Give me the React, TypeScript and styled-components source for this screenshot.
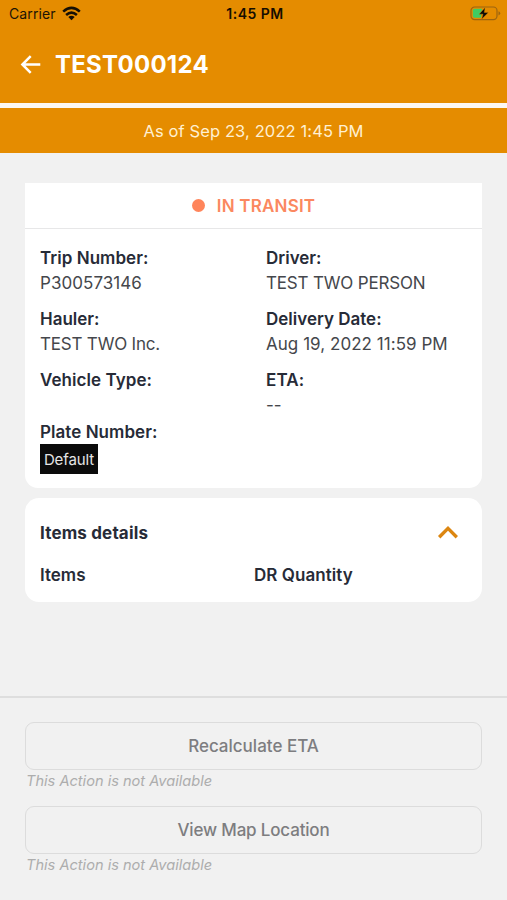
import React from "react";
import styled, { createGlobalStyle } from "styled-components";

const orange = "#e58c00";
const ink = "#272b37";

const GlobalStyle = createGlobalStyle`
  *, *::before, *::after { box-sizing: border-box; }
  body {
    margin: 0;
    background: #f1f1f1;
    font-family: Inter, "Liberation Sans", sans-serif;
  }
`;

const Screen = styled.div`
  display: flex;
  flex-direction: column;
  width: 100%;
  height: 900px;
  overflow: hidden;
  background: #f1f1f1;
`;

const Text = styled.span<{ $spacing?: number }>`
  white-space: nowrap;
  letter-spacing: ${(p) => p.$spacing ?? 0}px;
`;

const StatusBar = styled.div`
  display: grid;
  grid-template-columns: 1fr auto 1fr;
  align-items: center;
  height: 27px;
  padding: 0 6px 0 9px;
  background: ${orange};
  color: #1c1405;
  font-size: 14px;
  line-height: 27px;
`;

const Carrier = styled.div`
  display: flex;
  align-items: center;
  gap: 6px;
`;

const Clock = styled(Text)`
  font-weight: 600;
  color: #160e00;
`;

const Battery = styled.svg`
  justify-self: end;
`;

const Header = styled.header`
  display: flex;
  align-items: center;
  gap: 14px;
  height: 76px;
  padding: 0 20px;
  background: ${orange};
  color: #fff;
`;

const Title = styled.h1`
  margin: 0;
  font-size: 24px;
  font-weight: 700;
  line-height: 76px;
`;

const AsOf = styled.div`
  height: 45px;
  margin-top: 5px;
  background: ${orange};
  color: #fff0d2;
  font-size: 16.5px;
  line-height: 46px;
  text-align: center;
  box-shadow: 0 -5px 0 #fcf8f3;
`;

const Content = styled.main`
  display: flex;
  flex-direction: column;
  gap: 10px;
  flex: 1;
  padding: 30px 25px 0;
`;

const TripCard = styled.section`
  height: 305px;
  background: #fff;
  border-radius: 0 0 13px 13px;
`;

const Status = styled.div`
  display: flex;
  align-items: center;
  justify-content: center;
  gap: 12px;
  height: 46px;
  border-bottom: 1px solid #e7e7e8;
  color: #fb8860;
  font-size: 17px;
  font-weight: 600;
`;

const Dot = styled.i`
  width: 13px;
  height: 13px;
  border-radius: 50%;
  background: #ff855b;
`;

const Details = styled.div`
  display: grid;
  grid-template-columns: 226px 1fr;
  grid-template-rows: 61px 61px 52px auto;
  padding: 16px 15px 0;
`;

const Field = styled.div`
  display: flex;
  flex-direction: column;
  align-items: flex-start;
  font-size: 17px;
  line-height: 26px;
`;

const Label = styled(Text)`
  height: 25px;
  color: ${ink};
  font-weight: 600;
`;

const Value = styled(Text)`
  color: #45474c;
`;

const Plate = styled.div`
  width: 58px;
  height: 30px;
  background: #0b0b0b;
  color: #e5e5e5;
  font-size: 15px;
  line-height: 31px;
  text-align: center;
`;

const ItemsCard = styled.section`
  height: 104px;
  padding: 21px 15px 0;
  background: #fff;
  border-radius: 14px;
  color: ${ink};
  font-size: 17px;
  font-weight: 600;
  line-height: 28px;
`;

const ItemsHeading = styled.div`
  display: flex;
  align-items: center;
  justify-content: space-between;
  height: 28px;
  padding-right: 8px;
  font-weight: 700;
`;

const Chevron = styled.svg`
  margin-bottom: 2px;
`;

const Columns = styled.div`
  display: grid;
  grid-template-columns: 214px 1fr;
  margin-top: 14px;
`;

const Footer = styled.footer`
  height: 204px;
  padding: 24px 25px 0;
  border-top: 2px solid #dedede;
`;

const Action = styled.button`
  display: block;
  width: 100%;
  height: 48px;
  padding: 0;
  border: 1.5px solid #dcdcdc;
  border-radius: 9px;
  background: transparent;
  color: #7d7d80;
  font: 500 17px/46px Inter, sans-serif;
`;

const Note = styled.p`
  margin: 0;
  height: 36px;
  padding-left: 1px;
  color: #adadad;
  font-size: 14.6px;
  font-style: italic;
  line-height: 23px;
`;

const fields = [
  { label: "Trip Number:", value: "P300573146", ls: 0.04, vs: 0.05 },
  { label: "Driver:", value: "TEST TWO PERSON", ls: 0, vs: -0.18 },
  { label: "Hauler:", value: "TEST TWO Inc.", ls: 0, vs: -0.2 },
  { label: "Delivery Date:", value: "Aug 19, 2022 11:59 PM", ls: 0, vs: 0.04 },
  { label: "Vehicle Type:", value: "", ls: 0.06, vs: 0 },
  { label: "ETA:", value: "--", ls: 0.1, vs: 0 },
];

const actions = [
  { label: "Recalculate ETA", ls: 0 },
  { label: "View Map Location", ls: -0.17 },
];

export default function App() {
  return (
    <Screen>
      <GlobalStyle />
      <StatusBar>
        <Carrier>
          <Text $spacing={0.1}>Carrier</Text>
          <svg width="19" height="15" viewBox="0 0 19 15" fill="none" stroke="#171005" strokeWidth="2.6">
            <path d="M1.2 5.6Q9.5-1.8 17.8 5.6" />
            <path d="M4.1 9Q9.5 4.4 14.9 9" />
            <path d="M9.5 14.2 6.3 11Q9.5 8.4 12.7 11Z" fill="#171005" stroke="none" />
          </svg>
        </Carrier>
        <Clock $spacing={0.5}>1:45 PM</Clock>
        <Battery width="31" height="15" viewBox="0 0 31 15">
          <rect x="1" y="1" width="26" height="12.6" rx="3.6" fill="none" stroke="#9c6410" strokeWidth="1.2" />
          <path d="M28.5 5.2Q30.2 5.8 30.2 7.3T28.5 9.4Z" fill="#9c6410" />
          <path d="M4.5 2.8H12L11 11.8H4.5Q2.8 11.8 2.8 10V4.6Q2.8 2.8 4.5 2.8Z" fill="#3fcb62" />
          <path d="M15.2 1.4 9 8.2H13L11.6 13.2 18.4 6.4H14.3Z" fill="#0b0b08" stroke={orange} strokeWidth=".4" />
        </Battery>
      </StatusBar>
      <Header>
        <svg width="21" height="20" viewBox="0 0 21 20" fill="none" stroke="#fff" strokeWidth="2.5">
          <path d="M20.3 9.5H2.5M10.7 1.2 2.4 9.5l8.3 8.3" />
        </svg>
        <Title><Text $spacing={0.25}>TEST000124</Text></Title>
      </Header>
      <AsOf><Text $spacing={0.12}>As of Sep 23, 2022 1:45 PM</Text></AsOf>
      <Content>
        <TripCard>
          <Status>
            <Dot />
            <Text $spacing={0.2}>IN TRANSIT</Text>
          </Status>
          <Details>
            {fields.map((f) => (
              <Field key={f.label}>
                <Label $spacing={f.ls}>{f.label}</Label>
                <Value $spacing={f.vs}>{f.value}</Value>
              </Field>
            ))}
            <Field>
              <Label $spacing={0.05}>Plate Number:</Label>
              <Plate><Text $spacing={-0.1}>Default</Text></Plate>
            </Field>
          </Details>
        </TripCard>
        <ItemsCard>
          <ItemsHeading>
            <Text $spacing={0.16}>Items details</Text>
            <Chevron width="22" height="14" viewBox="0 0 22 14" fill="none" stroke="#dc8611" strokeWidth="3.4">
              <path d="m2.2 12.2 8.8-8.8 8.8 8.8" />
            </Chevron>
          </ItemsHeading>
          <Columns>
            <Text>Items</Text>
            <Text $spacing={0.06}>DR Quantity</Text>
          </Columns>
        </ItemsCard>
      </Content>
      <Footer>
        {actions.map((a) => (
          <React.Fragment key={a.label}>
            <Action disabled><Text $spacing={a.ls}>{a.label}</Text></Action>
            <Note><Text>This Action is not Available</Text></Note>
          </React.Fragment>
        ))}
      </Footer>
    </Screen>
  );
}
